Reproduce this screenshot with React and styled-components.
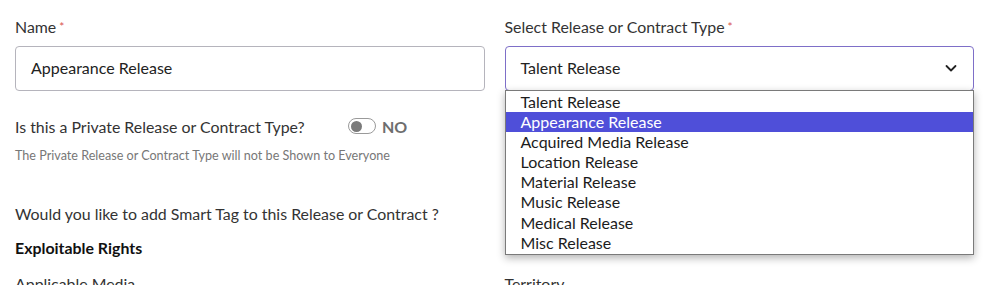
import React from 'react'
import styled, { createGlobalStyle } from 'styled-components'

const GlobalStyle = createGlobalStyle`
    body {
        margin: 0;
        background: #ffffff;
        font-family: Lato, "Open Sans", Arial, sans-serif;
        color: #222;
    }
`;

const Page = styled.div`
    padding: 18px 16px 0 15px;
    height: 285px;
    box-sizing: border-box;
    overflow: hidden;
`;

const Row = styled.div`
    display: grid;
    grid-template-columns: 1fr 1fr;
    column-gap: 20px;
`;

const Field = styled.div`
    position: relative;
    display: flex;
    flex-direction: column;
`;

const Label = styled.label`
    font-size: 15.9px;
    line-height: 18px;
    color: #333;
    margin-bottom: 10px;
`;

const Star = styled.span`
    color: #d9534f;
    font-size: 12px;
    margin-left: 3px;
    vertical-align: top;
`;

const Input = styled.div`
    height: 45px;
    box-sizing: border-box;
    border: 1px solid ${({ $active }) => ($active ? '#7e6fc8' : '#b5b4bc')};
    border-radius: 4px;
    padding: 0 15px 2px;
    display: flex;
    align-items: center;
    justify-content: space-between;
    font-size: 16px;
    color: #222;
`;

const Menu = styled.ul`
    position: absolute;
    top: 72px;
    left: 0;
    right: 0;
    margin: 0;
    padding: 1px 0;
    list-style: none;
    background: #fff;
    border: 1px solid #7a7a7a;
    box-shadow: 0 3px 8px rgba(0, 0, 0, 0.3);
    z-index: 5;
`;

const Option = styled.li`
    height: 20.1px;
    line-height: 20px;
    padding-left: 15px;
    font-size: 16px;
    color: ${({ $selected }) => ($selected ? '#fff' : '#1c1c1c')};
    background: ${({ $selected }) => ($selected ? '#4f4fd9' : 'transparent')};
`;

const ToggleRow = styled.div`
    display: flex;
    align-items: center;
    margin-top: 25px;
    height: 20px;
`;

const Question = styled.span`
    font-size: 15.9px;
    color: #333;
    width: 333px;
`;

const Track = styled.span`
    width: 28px;
    height: 16px;
    box-sizing: border-box;
    border: 1px solid #9a9a9a;
    border-radius: 8px;
    display: flex;
    align-items: center;
    padding-left: 2px;
`;

const Knob = styled.span`
    width: 11px;
    height: 11px;
    border-radius: 50%;
    background: #7a7a7a;
`;

const ToggleText = styled.span`
    margin-left: 6px;
    font-size: 16px;
    font-weight: 700;
    color: #6e6e6e;
`;

const Hint = styled.p`
    margin: 13px 0 0;
    font-size: 12.6px;
    line-height: 14px;
    color: #777;
`;

const Prompt = styled.p`
    margin: 42px 0 0;
    font-size: 15.9px;
    line-height: 18px;
    color: #333;
`;

const Heading = styled.h4`
    margin: 16px 0 0;
    font-size: 15.9px;
    line-height: 18px;
    font-weight: 700;
    color: #111;
`;

const SubLabel = styled.span`
    display: block;
    margin-top: 18px;
    font-size: 15.9px;
    line-height: 18px;
    color: #333;
`;

const Chevron = () => (
    <svg width="14" height="14" viewBox="0 0 14 14">
        <polyline points="2.5,5 7,9.5 11.5,5" fill="none" stroke="#222" strokeWidth="1.8" strokeLinecap="round" strokeLinejoin="round" />
    </svg>
);

const options = [
    'Talent Release',
    'Appearance Release',
    'Acquired Media Release',
    'Location Release',
    'Material Release',
    'Music Release',
    'Medical Release',
    'Misc Release',
];

const App = () => {
    return (
        <Page>
            <GlobalStyle />
            <Row>
                <Field>
                    <Label>Name<Star>*</Star></Label>
                    <Input>Appearance Release</Input>
                </Field>
                <Field>
                    <Label>Select Release or Contract Type<Star>*</Star></Label>
                    <Input $active>
                        Talent Release
                        <Chevron />
                    </Input>
                    <Menu>
                        {options.map((o) => (
                            <Option key={o} $selected={o === 'Appearance Release'}>{o}</Option>
                        ))}
                    </Menu>
                </Field>
            </Row>
            <ToggleRow>
                <Question>Is this a Private Release or Contract Type?</Question>
                <Track><Knob /></Track>
                <ToggleText>NO</ToggleText>
            </ToggleRow>
            <Hint>The Private Release or Contract Type will not be Shown to Everyone</Hint>
            <Prompt>Would you like to add Smart Tag to this Release or Contract ?</Prompt>
            <Heading>Exploitable Rights</Heading>
            <Row>
                <SubLabel>Applicable Media</SubLabel>
                <SubLabel>Territory</SubLabel>
            </Row>
        </Page>
    )
}

export default App
